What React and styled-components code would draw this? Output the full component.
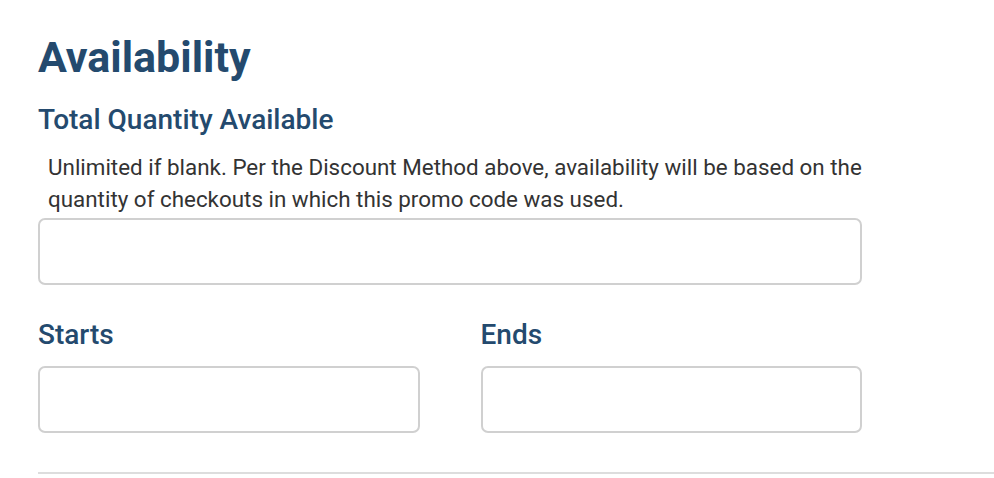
import styled, { createGlobalStyle } from "styled-components";

const GlobalStyle = createGlobalStyle`
  body {
    margin: 0;
    background: #fff;
    font-family: Roboto, "Liberation Sans", sans-serif;
  }
`;

const Section = styled.section`
  padding: 24px 0 0 38px;
`;

const Title = styled.h2`
  margin: 0;
  font-size: 43px;
  font-weight: 700;
  line-height: 66px;
  color: #244a6e;
`;

const Form = styled.div`
  max-width: 824px;
`;

const Label = styled.label`
  display: block;
  font-size: 28px;
  font-weight: 500;
  color: #244a6e;
  line-height: 40px;
  margin: ${(p) => p.$top || 0}px 0 0;
`;

const Help = styled.p`
  margin: 11px 0 3px 10px;
  font-size: 22.4px;
  line-height: 32px;
  color: #333;
`;

const Input = styled.input`
  display: block;
  box-sizing: border-box;
  width: 100%;
  height: 67px;
  border: 2px solid #d0d0d0;
  border-radius: 7px;
  background: #fff;
  margin-top: ${(p) => p.$top || 0}px;
`;

const Row = styled.div`
  display: grid;
  grid-template-columns: 1fr 1fr;
  column-gap: 61px;
  margin-top: 30px;
`;

const Divider = styled.hr`
  border: none;
  border-top: 2px solid #ddd;
  margin: 39px 0 0;
`;

export default function App() {
  return (
    <>
      <GlobalStyle />
      <Section>
        <Title>Availability</Title>
        <Form>
          <Label $top={10}>Total Quantity Available</Label>
          <Help>
            Unlimited if blank. Per the Discount Method above, availability will be based on the
            quantity of checkouts in which this promo code was used.
          </Help>
          <Input type="text" />
          <Row>
            <div>
              <Label>Starts</Label>
              <Input type="text" $top={11} />
            </div>
            <div>
              <Label>Ends</Label>
              <Input type="text" $top={11} />
            </div>
          </Row>
        </Form>
        <Divider />
      </Section>
    </>
  );
}
